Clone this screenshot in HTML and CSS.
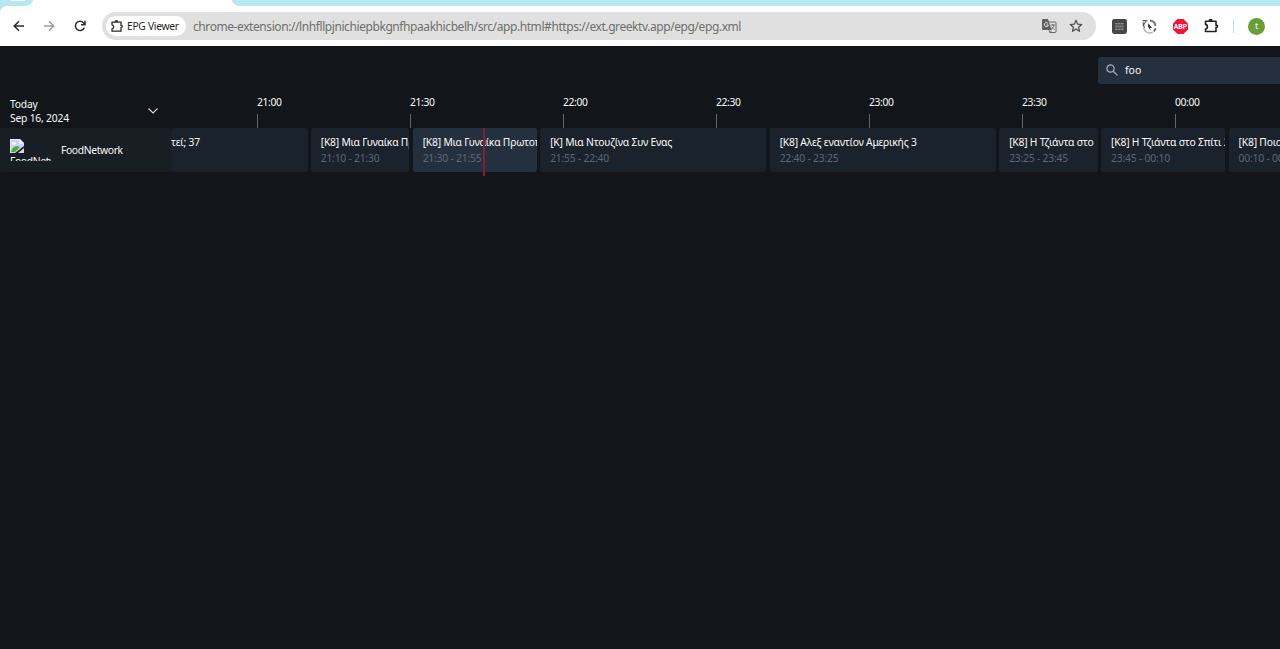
FILE: index.html
```
<!DOCTYPE html>
<html lang="en">
<head>
    <meta charset="UTF-8">
    <meta name="viewport" content="width=device-width, initial-scale=1.0">
    <title>EPG Viewer</title>
    <link rel="stylesheet" href="styles.css">
</head>
<body>
    <div class="browser">
        <div class="tab-strip">
            <div class="tab-left"><div class="tab-piece"></div></div>
            <div class="tab-right"></div>
        </div>
        <div class="toolbar-wrap">
        <div class="toolbar">
            <svg class="nav-icon" viewBox="0 0 14 14" fill="none" stroke="#2b2b2b" stroke-width="1.5"><path d="M12 7H2.4M7 2.2 2.2 7 7 11.8"/></svg>
            <svg class="nav-icon" viewBox="0 0 14 14" fill="none" stroke="#9b9b9b" stroke-width="1.4"><path d="M1 7h9.6M6 2.2 10.800 7 6 11.8"/></svg>
            <svg class="nav-icon" viewBox="0 0 14 14" fill="none" stroke="#2b2b2b" stroke-width="1.5"><path d="M11.3 8.6A4.6 4.6 0 1 1 10.6 4L11.6 5.2"/><path d="M12 1.8v4H8"/></svg>
            <div class="address">
                <div class="chip">
                    <svg class="puzzle" viewBox="0 0 14 14" fill="none" stroke="#2b2b2b" stroke-width="1.3" stroke-linejoin="round"><path d="M2 3.2H11V6.400C12.600 6 12.600 8.700 11 8.300V12.2H2V9.8C4.200 9.600 4.200 6 2 5.800Z"/><path d="M5.200 2.800C5.200 1.400 7.600 1.400 7.600 2.800" fill="#2b2b2b"/></svg>
                    <span class="chip-text">EPG Viewer</span>
                </div>
                <span class="url">chrome-extension://lnhfllpjnichiepbkgnfhpaakhicbelh/src/app.html#https://ext.greektv.app/epg/epg.xml</span>
                <svg class="translate" viewBox="0 0 16 16"><path d="M6 4h8a1 1 0 0 1 1 1v8.500a1 1 0 0 1-1 1H9" fill="none" stroke="#666" stroke-width="1"/><path d="M2 1h5l3.500 11H2a1 1 0 0 1-1-1V2a1 1 0 0 1 1-1z" fill="#606060"/><path d="M7 5.500A2 2 0 1 0 7.300 7H5.500" fill="none" stroke="#e8e8e8"/><path d="M9.500 7H14M11.700 6v1M13 7c-.3 2-1.500 3.500-3 4.500M10.500 8.500c.7 1.400 1.700 2.300 3 3M8 12l1 3 1.500-2.500" fill="none" stroke="#666" stroke-width=".9"/></svg>
                <svg class="star" viewBox="0 0 14 14" fill="none" stroke="#4a4a4a" stroke-width="1.200" stroke-linejoin="round"><path d="M7 1.300 8.600 5.100l4.100.4-3.100 2.700.9 4.100L7 10.100l-3.500 2.200.9-4.100L1.300 5.500l4.100-.4z"/></svg>
            </div>
            <svg class="ext ext-box" viewBox="0 0 14 14"><rect width="14" height="14" rx="2" fill="#484848"/><path d="M3 4.500h8M3 9.500h8" stroke="#aaa" stroke-dasharray="2.200 .5"/><path d="M3 7h8" stroke="#858585" stroke-width="2" stroke-dasharray="1.500 .4"/></svg>
            <svg class="ext ext-spin" viewBox="0 0 14 14" fill="none"><path d="M7.500 1.400A5.700 5.700 0 0 1 12.500 6.500" stroke="#777" stroke-width="2"/><path d="M12.600 8.500A5.700 5.700 0 0 1 11 11.500" stroke="#555" stroke-width="1.500"/><path d="M10 12.300A5.800 5.800 0 0 1 1.500 8.500" stroke="#b5b5b5" stroke-width="1.400"/><path d="M.5 1.500H5M3.800 2.500a5 5 0 0 0-1.600 6M1.200 3v3.500" stroke="#555" stroke-width="1"/><path d="M6 4l3.300 4.500-1.800-.2.500 2.500L5.500 7z" fill="#333"/></svg>
            <svg class="ext ext-abp" viewBox="0 0 14 14"><path d="M4.200 0h5.600L14 4.200v5.600L9.800 14H4.200L0 9.800V4.200z" fill="#f0163a"/><text x="7" y="9.400" text-anchor="middle">ABP</text></svg>
            <svg class="ext ext-puzzle" viewBox="0 0 16 16" fill="none" stroke="#242424" stroke-width="1.600" stroke-linejoin="round"><path d="M2.500 3.300H13V7.200C15 6.700 15 9.700 13 9.200V13.500H2.500V11C5 10.700 5 6.700 2.500 6.400Z"/><path d="M6.300 2.800C6.300 1.200 9 1.200 9 2.800" fill="#242424"/></svg>
            <div class="divider"></div>
            <div class="avatar">t</div>
        </div>
        </div>
    </div>

    <div class="app">
        <div class="search">
            <svg class="search-icon" viewBox="0 0 12 12" fill="none" stroke="#a3adb9" stroke-width="1.300"><circle cx="4.500" cy="4.500" r="3.600"/><path d="M7.200 7.200 11.400 11.400"/></svg>
            <span>foo</span>
        </div>

        <div class="timeline">
            <div class="day">
                <div class="day-text">Today<br>Sep 16, 2024</div>
                <svg class="chevron" viewBox="0 0 10 6" fill="none" stroke="#d8dadc" stroke-width="1.100"><path d="M.5.500 5 5 9.500.500"/></svg>
            </div>
            <div class="hours">
                <div class="hour">21:00</div>
                <div class="hour">21:30</div>
                <div class="hour">22:00</div>
                <div class="hour">22:30</div>
                <div class="hour">23:00</div>
                <div class="hour">23:30</div>
                <div class="hour">00:00</div>
            </div>
        </div>

        <div class="row">
            <div class="channel">
                <div class="logo">
                    <svg class="broken" viewBox="0 0 14 14"><path d="M0 0h9.500L14 4.500V7L5 14H0z" fill="#c5d7f3"/><path d="M0 0h9.500L14 4.500V7M.5 14V.500h9" fill="none" stroke="#e5e7ec"/><path d="M9.500 0v4.500H14z" fill="#fff"/><ellipse cx="4" cy="4.500" rx="2" ry="1.200" fill="#fff"/><path d="M1 13c1-4 4-7 9-5L5 13z" fill="#4daa3c"/><path d="M14 9v5H8z" fill="#d5d8de"/></svg>
                    <div class="alt">FoodNetwork</div>
                </div>
                <span class="channel-name">FoodNetwork</span>
            </div>
            <div class="programs">
                <div class="program p-first"><div class="title">τεί; 37</div></div>
                <div class="program p20"><div class="title">[Κ8] Μια Γυναίκα Πρωτοπόρος</div><div class="time">21:10 - 21:30</div></div>
                <div class="program p25 current"><div class="title">[Κ8] Μια Γυναίκα Πρωτοπόρος</div><div class="time">21:30 - 21:55</div></div>
                <div class="program p45"><div class="title">[Κ] Μια Ντουζίνα Συν Ενας</div><div class="time">21:55 - 22:40</div></div>
                <div class="program p45"><div class="title">[Κ8] Αλεξ εναντίον Αμερικής 3</div><div class="time">22:40 - 23:25</div></div>
                <div class="program p20"><div class="title">[Κ8] Η Τζιάντα στο</div><div class="time">23:25 - 23:45</div></div>
                <div class="program p25"><div class="title">[Κ8] Η Τζιάντα στο Σπίτι 2</div><div class="time">23:45 - 00:10</div></div>
                <div class="program p25"><div class="title">[Κ8] Ποιος</div><div class="time">00:10 - 00:35</div></div>
            </div>
            <div class="now"></div>
        </div>
    </div>
</body>
</html>
```
FILE: styles.css
```
* {
    box-sizing: border-box;
}
body {
    margin: 0;
    height: 649px;
    overflow: hidden;
    font-family: "Noto Sans", "Open Sans", sans-serif;
    font-size: 10.3px;
    letter-spacing: -0.2px;
    color: #fafafa;
    background: #12161a;
}
svg {
    display: block;
    flex: none;
}
/* browser chrome */
.browser {
    height: 46px;
    background: #fff;
}
.tab-strip {
    display: flex;
    justify-content: space-between;
    height: 6px;
}
.tab-left {
    width: 33px;
    background: #b5e8f2;
    border-bottom-right-radius: 8px 6px;
}
.tab-piece {
    width: 14px;
    height: 1px;
    margin-left: 11px;
    background: #fff;
}
.tab-right {
    width: 1048px;
    background: #b5e8f2;
    border-bottom-left-radius: 8px 6px;
}
.toolbar-wrap {
    height: 40px;
    background: linear-gradient(90deg, #b5e8f2 8px, #fff 8px);
}
.toolbar {
    display: flex;
    align-items: center;
    height: 40px;
    padding-left: 12px;
    background: #fff;
    border-top-left-radius: 7px;
}
.nav-icon {
    width: 14px;
    height: 14px;
    margin-right: 16.500px;
}
.address {
    display: flex;
    align-items: center;
    width: 994px;
    height: 28px;
    margin-left: -1.500px;
    padding: 0 12px 0 4px;
    border-radius: 14px;
    background: #e0e0e0;
}
.chip {
    display: flex;
    align-items: center;
    width: 80px;
    height: 20px;
    padding-left: 4px;
    border-radius: 10px;
    background: #fff;
    color: #262626;
    letter-spacing: -0.3px;
    white-space: nowrap;
}
.puzzle {
    width: 14px;
    height: 14px;
    margin-right: 3px;
}
.url {
    flex: 1;
    margin-left: 7px;
    font-size: 12px;
    letter-spacing: -0.42px;
    color: #6e6f6b;
    white-space: nowrap;
}
.translate {
    width: 16px;
    height: 16px;
    margin-right: 12px;
}
.star {
    width: 14px;
    height: 14px;
    margin-right: 1px;
}
.ext {
    width: 15px;
    height: 15px;
}
.ext-box {
    margin-left: 16px;
}
.ext-spin {
    margin-left: 15px;
}
.ext-abp {
    margin-left: 16px;
}
.ext-abp text {
    font: bold 6.5px Roboto, sans-serif;
    letter-spacing: 0;
    fill: #fff;
}
.ext-puzzle {
    width: 16px;
    height: 16px;
    margin-left: 15px;
}
.divider {
    width: 1px;
    height: 13px;
    margin-left: 14px;
    background: #b5e0ec;
}
.avatar {
    width: 17px;
    height: 17px;
    margin-left: 14px;
    border-radius: 50%;
    background: #689f38;
    font-size: 9px;
    line-height: 16px;
    text-align: center;
}
/* guide */
.app {
    padding-top: 10.500px;
}
.search {
    display: flex;
    align-items: center;
    width: 200px;
    height: 27px;
    margin-left: 1098px;
    margin-bottom: 0.500px;
    padding-left: 8px;
    border-radius: 3px;
    background: #25303f;
    font-size: 10.500px;
    letter-spacing: 0;
}
.search-icon {
    width: 12px;
    height: 12px;
    margin-right: 7px;
}
.timeline {
    display: flex;
    height: 44px;
}
.day {
    display: flex;
    flex: none;
    width: 257px;
    padding: 14px 0 0 10px;
}
.day-text {
    width: 138px;
    line-height: 13.500px;
}
.chevron {
    width: 10px;
    height: 6px;
    margin-top: 10px;
}
.hours {
    display: flex;
    padding-top: 11px;
}
.hour {
    flex: none;
    width: 153px;
    height: 33px;
    line-height: 14px;
    letter-spacing: -0.35px;
}
.hour::after {
    content: "";
    display: block;
    width: 1px;
    height: 14px;
    margin-top: 5px;
    background: #626872;
}
.row {
    position: relative;
    display: flex;
    height: 44px;
}
.channel {
    display: flex;
    flex: none;
    align-items: center;
    width: 171px;
    padding-left: 10px;
    background: #171e24;
    border-radius: 2px;
    letter-spacing: -0.35px;
}
.logo {
    width: 41px;
    height: 22px;
    margin-right: 10px;
    overflow: hidden;
}
.broken {
    width: 14px;
    height: 14px;
}
.alt {
    margin-top: 1px;
    line-height: 14px;
}
.programs {
    display: flex;
    gap: 3.200px;
    overflow: hidden;
}
.program {
    flex: none;
    padding: 7px 0 0 10px;
    border-radius: 2px;
    background: #1a222b;
    overflow: hidden;
    white-space: nowrap;
}
.p-first {
    width: 136.500px;
    padding-left: 0;
}
.p20 {
    width: 98.800px;
}
.p25 {
    width: 124.300px;
}
.p45 {
    width: 226.300px;
}
.current {
    background: #25303e;
}
.title {
    line-height: 15px;
}
.time {
    line-height: 16px;
    color: #5f6676;
}
.now {
    position: absolute;
    left: 483px;
    top: 0;
    width: 1.500px;
    height: 48px;
    background: #7d2230;
}
```
